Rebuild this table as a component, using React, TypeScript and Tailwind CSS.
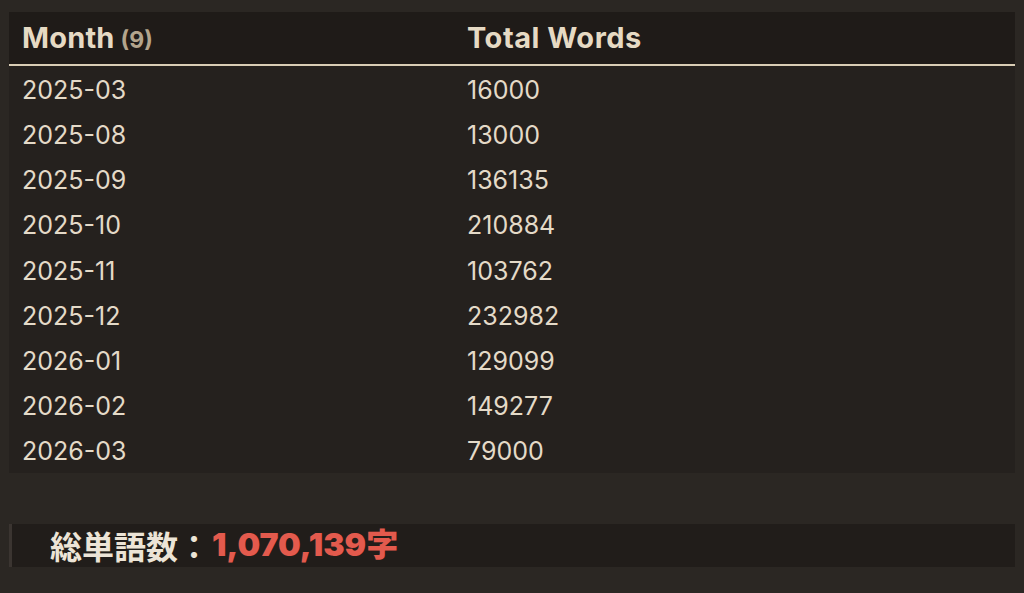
import React from "react";

const rows: [string, string][] = [
  ["2025-03", "16000"],
  ["2025-08", "13000"],
  ["2025-09", "136135"],
  ["2025-10", "210884"],
  ["2025-11", "103762"],
  ["2025-12", "232982"],
  ["2026-01", "129099"],
  ["2026-02", "149277"],
  ["2026-03", "79000"],
];

export default function App() {
  return (
    <div
      className="w-[1024px] h-[593px] bg-[#2b2723] pt-[12px] px-[9px] overflow-hidden"
      style={{ fontFamily: "Inter, 'Noto Sans CJK JP', sans-serif" }}
    >
      <div className="w-[1006px]">
        <div className="flex h-[54px] items-center bg-[#1f1b18] border-b-2 border-[#d9cdb5]">
          <div className="w-[445px] pl-[13px] flex items-baseline gap-[6px]">
            <span className="text-[29px] font-bold text-[#e6dac4] tracking-[0.2px]">Month</span>
            <span className="text-[23px] font-bold text-[#b3a58d]">(9)</span>
          </div>
          <div className="pl-[13px] text-[29px] font-bold text-[#e6dac4] tracking-[0.5px]">Total Words</div>
        </div>
        <div className="bg-[#25211e]">
          {rows.map(([m, w]) => (
            <div key={m} className="flex h-[45.2px] pt-[4px] items-center text-[25px] text-[#e4dac8]">
              <div className="w-[445px] pl-[13px]">{m}</div>
              <div className="pl-[13px]">{w}</div>
            </div>
          ))}
        </div>
      </div>
      <div className="mt-[51px] w-[1006px] h-[43px] bg-[#211d1a] border-l-[3px] border-[#3b3531] flex items-center pl-[38px]">
        <span
          className="text-[32px] font-bold text-[#ece4d6]"
          style={{ fontFamily: "'Noto Sans CJK JP', sans-serif" }}
        >
          総単語数：
        </span>
        <span
          className="ml-[2px] text-[32px] font-black text-[#e35a4d]"
          style={{ fontFamily: "Inter, 'Noto Sans CJK JP', sans-serif" }}
        >
          1,070,139字
        </span>
      </div>
    </div>
  );
}
